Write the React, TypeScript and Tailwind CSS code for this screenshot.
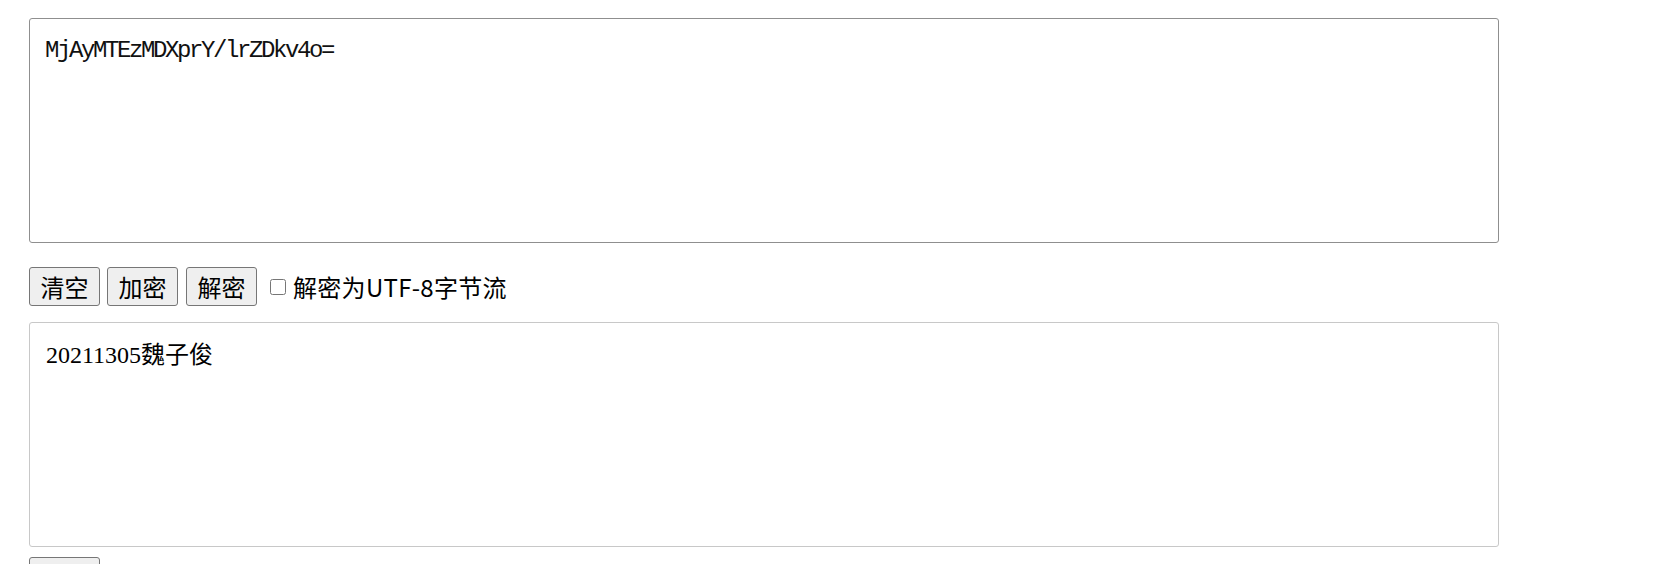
import type React from 'react'
import { useState } from 'react'

// Base64 加解密小工具页面
const App: React.FC = () => {
  const [cipher, setCipher] = useState('MjAyMTEzMDXprY/lrZDkv4o=')
  const [plain, setPlain] = useState('20211305魏子俊')
  const [utf8, setUtf8] = useState(false)

  const btn =
    'w-[71px] h-[39px] bg-[#efefef] border border-[#767676] rounded-[3px] text-[24px] leading-none text-black flex items-center justify-center'

  return (
    <div className="min-h-screen bg-white pl-[29px] pt-[18px] font-['Noto_Sans_CJK_SC',sans-serif]">
      {/* 密文 */}
      <textarea
        value={cipher}
        onChange={(e) => setCipher(e.target.value)}
        className="block w-[1470px] h-[225px] resize-none border border-[#8f8f8f] rounded-[3px] px-[15px] pt-[17px] outline-none text-[24px] tracking-[-2.4px] leading-[30px] text-[#111] font-['Liberation_Mono',monospace]"
      />

      {/* 操作行 */}
      <div className="flex items-center mt-[24px] h-[39px]">
        <button type="button" className={btn} onClick={() => setCipher('')}>
          清空
        </button>
        <button type="button" className={`${btn} ml-[7px]`}>
          加密
        </button>
        <button type="button" className={`${btn} ml-[8px]`}>
          解密
        </button>
        <label className="flex items-center ml-[13px] text-[24px] tracking-[0.3px] text-black">
          <input
            type="checkbox"
            checked={utf8}
            onChange={(e) => setUtf8(e.target.checked)}
            className="w-[16px] h-[16px] m-0 mr-[7px] accent-[#0075ff]"
          />
          解密为UTF-8字节流
        </label>
      </div>

      {/* 明文 */}
      <textarea
        value={plain}
        onChange={(e) => setPlain(e.target.value)}
        className="block mt-[16px] w-[1470px] h-[225px] resize-none border border-[#c8c8c8] rounded-[3px] px-[16px] pt-[17px] outline-none text-[24px] leading-[30px] text-black font-['Liberation_Serif','Noto_Sans_CJK_SC',serif]"
      />

      {/* 下方按钮，文字在画面之外 */}
      <div className="mt-[10px]">
        <button type="button" className={btn} aria-label="复制" />
      </div>
    </div>
  )
}

export default App
